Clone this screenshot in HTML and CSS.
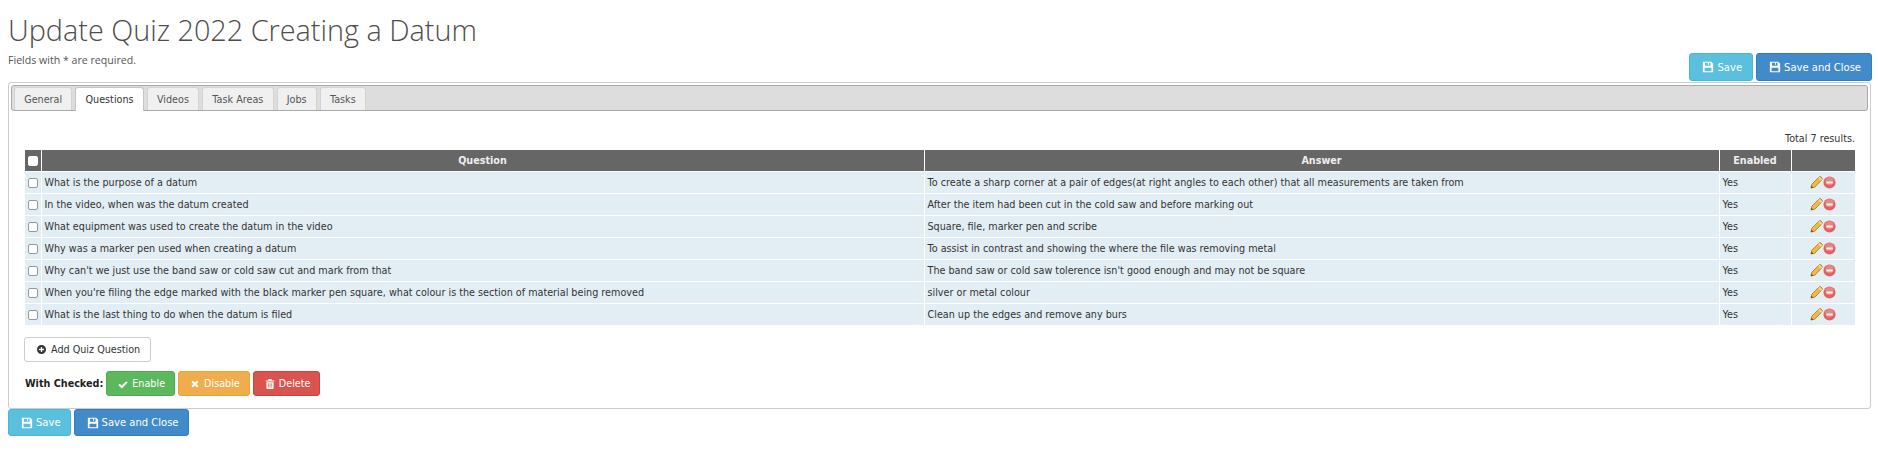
FILE: index.html
```html
<!DOCTYPE html>
<html lang="en">
<head>
<meta charset="utf-8">
<title>Update Quiz 2022 Creating a Datum</title>
<link rel="stylesheet" href="styles.css">
</head>
<body>
<svg class="defs" width="0" height="0" aria-hidden="true">
  <defs>
    <symbol id="floppy" viewBox="0 0 14 14"><path fill-rule="evenodd" d="M1.500 1h9.200L13 3.300v9.200c0 .3-.2.5-.5.5h-11c-.3 0-.5-.2-.5-.5v-11c0-.3.2-.5.5-.5zM3.500 2v3.500h6.500V2H8.200v2.500H7V2zM3 8v4h8V8z" fill="currentColor"/></symbol>
    <symbol id="pencil" viewBox="0 0 14 14"><path d="M1 13l1-4.200L9.900 1c.6-.5 1.300-.5 1.800 0l1.200 1.200c.5.6.5 1.300 0 1.800L5.200 12z" fill="#eebb44" stroke="#a8792a" stroke-width=".9"/><path d="M1 13l.6-2.600L3.600 12.400z" fill="#5a4a30"/><path d="M9.500 1.500l3 3" stroke="#f3e0c8" stroke-width="1.400"/></symbol>
    <symbol id="minus" viewBox="0 0 14 14"><circle cx="7" cy="7" r="6.500" fill="#e0635f"/><circle cx="7" cy="5.500" r="4.500" fill="#ea8683"/><rect x="3.500" y="6" width="7" height="2.200" rx=".6" fill="#fbeeee"/></symbol>
  </defs>
</svg>

<header class="page-head">
  <div class="head-text">
    <h1 class="title">Update Quiz 2022 Creating a Datum</h1>
    <p class="note">Fields with * are required.</p>
  </div>
  <div class="actions actions-top">
    <button class="btn btn-info"><svg class="ico"><use href="#floppy"/></svg>Save</button>
    <button class="btn btn-primary"><svg class="ico"><use href="#floppy"/></svg>Save and Close</button>
  </div>
</header>

<section class="panel">
  <nav class="tabs">
    <a class="tab">General</a>
    <a class="tab tab-active">Questions</a>
    <a class="tab">Videos</a>
    <a class="tab">Task Areas</a>
    <a class="tab">Jobs</a>
    <a class="tab">Tasks</a>
  </nav>
  <div class="tab-body">
    <p class="summary">Total 7 results.</p>
    <table class="grid">
      <colgroup>
        <col class="c-check"><col class="c-question"><col class="c-answer"><col class="c-enabled"><col class="c-actions">
      </colgroup>
      <thead>
        <tr>
          <th class="cell-check"><span class="head-box"></span></th>
          <th>Question</th><th>Answer</th><th>Enabled</th><th></th>
        </tr>
      </thead>
      <tbody>
        <tr><td class="cell-check"><span class="box"></span></td><td>What is the purpose of a datum</td><td>To create a sharp corner at a pair of edges(at right angles to each other) that all measurements are taken from</td><td>Yes</td><td class="cell-actions"><svg class="row-ico"><use href="#pencil"/></svg><svg class="row-ico"><use href="#minus"/></svg></td></tr>
        <tr><td class="cell-check"><span class="box"></span></td><td>In the video, when was the datum created</td><td>After the item had been cut in the cold saw and before marking out</td><td>Yes</td><td class="cell-actions"><svg class="row-ico"><use href="#pencil"/></svg><svg class="row-ico"><use href="#minus"/></svg></td></tr>
        <tr><td class="cell-check"><span class="box"></span></td><td>What equipment was used to create the datum in the video</td><td>Square, file, marker pen and scribe</td><td>Yes</td><td class="cell-actions"><svg class="row-ico"><use href="#pencil"/></svg><svg class="row-ico"><use href="#minus"/></svg></td></tr>
        <tr><td class="cell-check"><span class="box"></span></td><td>Why was a marker pen used when creating a datum</td><td>To assist in contrast and showing the where the file was removing metal</td><td>Yes</td><td class="cell-actions"><svg class="row-ico"><use href="#pencil"/></svg><svg class="row-ico"><use href="#minus"/></svg></td></tr>
        <tr><td class="cell-check"><span class="box"></span></td><td>Why can't we just use the band saw or cold saw cut and mark from that</td><td>The band saw or cold saw tolerence isn't good enough and may not be square</td><td>Yes</td><td class="cell-actions"><svg class="row-ico"><use href="#pencil"/></svg><svg class="row-ico"><use href="#minus"/></svg></td></tr>
        <tr><td class="cell-check"><span class="box"></span></td><td>When you're filing the edge marked with the black marker pen square, what colour is the section of material being removed</td><td>silver or metal colour</td><td>Yes</td><td class="cell-actions"><svg class="row-ico"><use href="#pencil"/></svg><svg class="row-ico"><use href="#minus"/></svg></td></tr>
        <tr><td class="cell-check"><span class="box"></span></td><td>What is the last thing to do when the datum is filed</td><td>Clean up the edges and remove any burs</td><td>Yes</td><td class="cell-actions"><svg class="row-ico"><use href="#pencil"/></svg><svg class="row-ico"><use href="#minus"/></svg></td></tr>
      </tbody>
    </table>
    <button class="btn btn-default btn-small"><svg class="ico" viewBox="0 0 14 14"><path fill-rule="evenodd" d="M7 0a7 7 0 1 1 0 14A7 7 0 0 1 7 0zM6 3v3H3v2h3v3h2V8h3V6H8V3z" fill="currentColor"/></svg>Add Quiz Question</button>
    <div class="checked-row">
      <strong class="checked-label">With Checked:</strong>
      <button class="btn btn-success btn-small"><svg class="ico" viewBox="0 0 14 14"><path d="M1.500 7.500l3.800 3.800L12.500 4" fill="none" stroke="currentColor" stroke-width="2.800"/></svg>Enable</button>
      <button class="btn btn-warning btn-small"><svg class="ico" viewBox="0 0 14 14"><path d="M3 3l8 8M11 3l-8 8" fill="none" stroke="currentColor" stroke-width="3"/></svg>Disable</button>
      <button class="btn btn-danger btn-small"><svg class="ico" viewBox="0 0 14 14"><path fill-rule="evenodd" d="M5 0h4l1 2h3v1.500H1V2h3zM2 4.500h10V13c0 .6-.4 1-1 1H3c-.6 0-1-.4-1-1zM4 6v6h1V6zM6.500 6v6h1V6zM9 6v6h1V6z" fill="currentColor"/></svg>Delete</button>
    </div>
  </div>
</section>

<div class="actions actions-bottom">
  <button class="btn btn-info"><svg class="ico"><use href="#floppy"/></svg>Save</button>
  <button class="btn btn-primary"><svg class="ico"><use href="#floppy"/></svg>Save and Close</button>
</div>
</body>
</html>
```
FILE: styles.css
```css
* { box-sizing: border-box; }
html, body { margin: 0; padding: 0; background: #fff; }
body {
  padding: 0 7px 0 8px;
  font-family: "DejaVu Sans", Verdana, sans-serif;
  font-size: 9.65px;
  color: #333;
}
.defs { position: absolute; }
.page-head { display: flex; justify-content: space-between; align-items: flex-end; height: 82px; }
.head-text { align-self: flex-start; }
.title {
  margin: 12px 0 0;
  font-family: "Open Sans", sans-serif;
  font-weight: 300;
  font-size: 28.8px;
  line-height: 36px;
  color: #4d4d4d;
}
.note {
  margin: 5px 0 0;
  font-family: "Open Sans", sans-serif;
  font-size: 10.6px;
  line-height: 15px;
  color: #555;
}
.actions { display: flex; gap: 3px; }
.actions-top { margin-right: -1px; margin-bottom: 1px; }
.btn {
  display: inline-flex;
  align-items: center;
  height: 28px;
  padding: 0 10px 0 12px;
  border: 1px solid transparent;
  border-radius: 3px;
  font-family: "DejaVu Sans", Verdana, sans-serif;
  font-size: 10px;
  color: #fff;
  white-space: nowrap;
}
.actions-bottom .btn { height: 27px; padding-right: 9px; }
.btn-small { height: 25px; padding: 0 9px 0 11px; font-size: 9.65px; }
.ico { width: 12px; height: 12px; margin-right: 3px; flex: none; }
.btn-small .ico { width: 10px; height: 10px; margin-right: 4px; }
.btn-info { background: #5bc0de; border-color: #46b8da; }
.btn-primary { background: #428bca; border-color: #357ebd; }
.btn-default { background: #fff; border-color: #ccc; color: #333; padding: 0 10px 0 12px; }
.btn-default .ico { width: 9px; height: 9px; margin-right: 5px; }
.btn-success { background: #5cb85c; border-color: #4cae4c; }
.btn-warning { background: #f0ad4e; border-color: #eea236; }
.btn-danger { background: #d9534f; border-color: #d43f3a; }
.panel {
  border: 1px solid #ccc;
  border-radius: 3px;
  padding: 2px;
  height: 327px;
}
.tabs {
  display: flex;
  align-items: flex-end;
  gap: 3px;
  height: 26px;
  padding: 0 0 0 2px;
  background: #ddd;
  border: 1px solid #aaa;
  border-radius: 3px;
}
.tab {
  display: flex;
  align-items: center;
  height: 23px;
  padding: 0 9.2px;
  background: #f0f0f0;
  border: 1px solid #d3d3d3;
  border-bottom: 0;
  border-radius: 3px 3px 0 0;
  color: #555;
}
.tab-active {
  height: 24px;
  margin-bottom: -1px;
  background: #fff;
  border-color: #c5c5c5;
  color: #333;
}
.tab-body { padding: 21px 13px 0 14px; }
.summary { margin: 0; height: 18px; line-height: 14px; text-align: right; font-size: 9.65px; }
.grid { width: 100%; border-collapse: collapse; table-layout: fixed; }
.c-check { width: 16px; }
.c-answer { width: 795px; }
.c-enabled { width: 72px; }
.c-actions { width: 64px; }
.grid th {
  height: 21px;
  padding: 0;
  background: #666;
  color: #eee;
  font-weight: 700;
  font-size: 9.65px;
  border-left: 1px solid #fff;
  text-align: center;
}
.grid th:first-child, .grid td:first-child { border-left: 0; }
.grid td {
  height: 22px;
  padding: 0 3px;
  background: #e3eef4;
  border-left: 1px solid #fff;
  border-top: 1px solid #fff;
  color: #333;
  white-space: nowrap;
}
.grid .cell-check { padding: 0; text-align: center; }
.grid .cell-actions { padding: 3px 0 0; text-align: center; }
.box, .head-box {
  display: inline-block;
  width: 10px;
  height: 10px;
  border: 1px solid #999;
  border-radius: 2px;
  background: #fff;
  vertical-align: middle;
}
.head-box { border-color: #fff; }
.row-ico { width: 13px; height: 13px; }
.tab-body > .btn-default { margin-top: 12px; display: flex; margin-left: -1px; }
.checked-row { display: flex; align-items: center; gap: 3px; margin-top: 9px; }
.checked-label { font-size: 9.65px; color: #222; }
```
